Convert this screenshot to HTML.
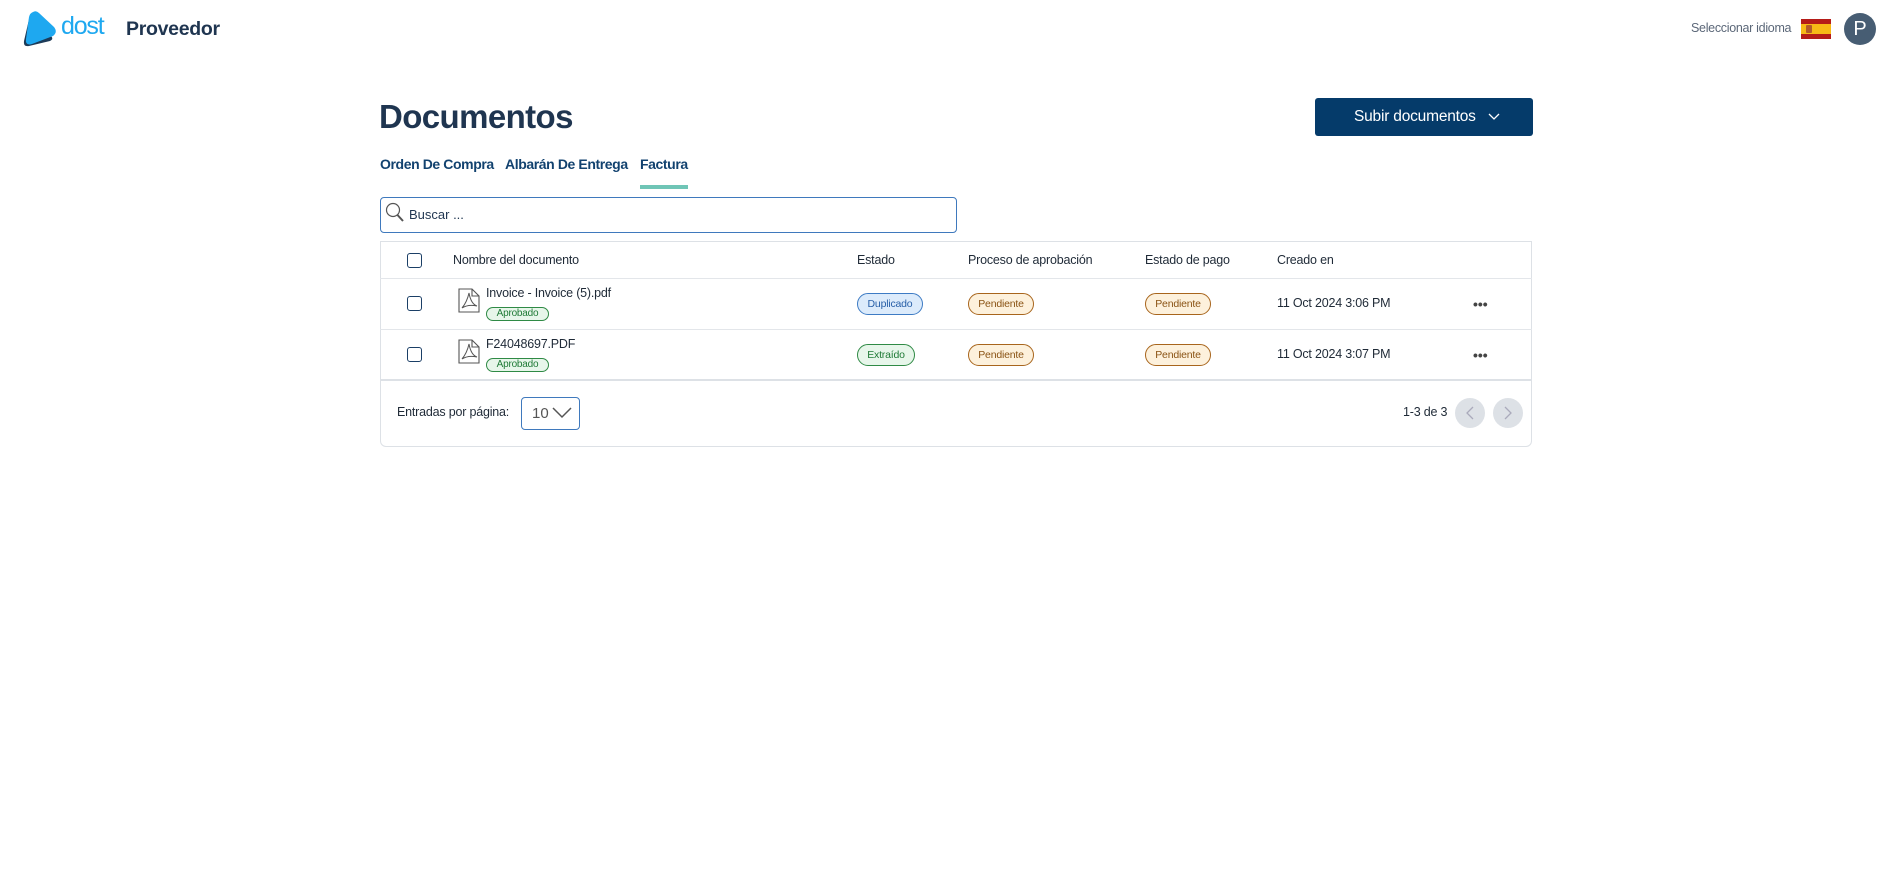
<!DOCTYPE html>
<html><head><meta charset="utf-8"><style>
*{box-sizing:border-box;margin:0;padding:0}
body{width:1898px;height:885px;background:#fff;font-family:"Liberation Sans",sans-serif;color:#1f2a37;position:relative;overflow:hidden}
.a{position:absolute}
.hd{font-size:12.5px;color:#1f2a37;letter-spacing:-0.2px}
.cb{position:absolute;width:15px;height:15px;border:1.5px solid #1b3f66;border-radius:3px}
.badge{position:absolute;height:22px;border-radius:11px;font-size:10.5px;line-height:20px;text-align:center;letter-spacing:-0.2px}
.pend{background:#fdf1dc;border:1.3px solid #a8651c;color:#8a5314;width:66px}
.apr{background:#e7f6ea;border:1.3px solid #2f8a45;color:#1f7a36;height:14px;line-height:12px;font-size:10px;width:63px;border-radius:7px}
.line{position:absolute;left:380px;width:1152px;height:1px;background:#e3e6ea}
.tab{position:absolute;top:156px;font-size:14px;font-weight:bold;color:#12426f;letter-spacing:-0.4px}
</style></head><body>
<svg class="a" style="left:20px;top:9px" width="38" height="40" viewBox="0 0 38 40"><path d="M10 6 L4 32 Q3 38 9 37 L30 32 Q34 30 31 27Z" fill="#1d3b58"/><path d="M13 3 Q16 1 19 4 L34 18 Q38 23 33 27 L12 35 Q5 37 6 30 L9 8 Q10 4 13 3Z" fill="#1ea8f0"/></svg>
<div class="a" style="left:61px;top:12px;font-size:25px;color:#1ea8f0;letter-spacing:-1.2px">dost</div>
<div class="a" style="left:126px;top:18px;font-size:19.5px;font-weight:bold;color:#1f3550;letter-spacing:-0.3px">Proveedor</div>
<div class="a" style="left:1691px;top:21px;font-size:12.5px;color:#5b6778;letter-spacing:-0.3px">Seleccionar idioma</div>
<div class="a" style="left:1801px;top:19px;width:30px;height:20px;background:linear-gradient(#b51c18 0 25%,#f7b916 25% 75%,#b51c18 75%)"></div>
<div class="a" style="left:1806px;top:25px;width:6px;height:8px;background:#b35a2a;border-radius:1px"></div>
<div class="a" style="left:1844px;top:13px;width:32px;height:32px;border-radius:50%;background:#475d73;color:#fff;font-size:20px;text-align:center;line-height:32px">P</div>

<div class="a" style="left:379px;top:98px;font-size:33px;font-weight:bold;color:#1f3550;letter-spacing:-0.6px">Documentos</div>
<div class="a" style="left:1315px;top:98px;width:218px;height:38px;background:#053b6a;border-radius:3px;color:#fff;font-size:15.5px;line-height:38px;padding-left:39px;letter-spacing:-0.2px">Subir documentos <svg width="12" height="8" viewBox="0 0 12 8" style="margin-left:8px"><path d="M1 1 L6 6 L11 1" stroke="#fff" fill="none" stroke-width="1.3"/></svg></div>

<div class="tab" style="left:380px">Orden De Compra</div>
<div class="tab" style="left:505px">Albarán De Entrega</div>
<div class="tab" style="left:640px">Factura</div>
<div class="a" style="left:640px;top:185px;width:48px;height:4px;background:#6fc5b6"></div>

<div class="a" style="left:380px;top:197px;width:577px;height:36px;border:1.3px solid #3f79bd;border-radius:4px"></div>
<svg class="a" style="left:385px;top:202px" width="20" height="22" viewBox="0 0 20 22"><circle cx="8" cy="8" r="6.5" stroke="#555" fill="none" stroke-width="1.2"/><path d="M12.5 13 L18 19" stroke="#555" stroke-width="2"/></svg>
<div class="a" style="left:409px;top:207px;font-size:13px;color:#1f3550">Buscar ...</div>

<div class="a" style="left:380px;top:241px;width:1152px;height:206px;border:1px solid #dde1e6;border-radius:0 0 6px 6px"></div>
<div class="line" style="top:278px"></div>
<div class="line" style="top:329px"></div>
<div class="line" style="top:379px;height:2px;background:#dde1e6"></div>

<div class="cb" style="left:407px;top:253px"></div>
<div class="a hd" style="left:453px;top:253px">Nombre del documento</div>
<div class="a hd" style="left:857px;top:253px">Estado</div>
<div class="a hd" style="left:968px;top:253px">Proceso de aprobación</div>
<div class="a hd" style="left:1145px;top:253px">Estado de pago</div>
<div class="a hd" style="left:1277px;top:253px">Creado en</div>

<div class="cb" style="left:407px;top:296px"></div>
<svg class="a" style="left:458px;top:288px" width="22" height="25" viewBox="0 0 22 25"><path d="M1 1 H14 L21 8 V24 H1Z M14 1 V8 H21" stroke="#555" fill="none" stroke-width="1.1"/><path d="M4 20 Q9 14 11 5 Q13 16 19 18 Q10 16 4 20Z" stroke="#555" fill="none" stroke-width="1"/></svg>
<div class="a" style="left:486px;top:286px;font-size:12.5px;letter-spacing:-0.2px">Invoice - Invoice (5).pdf</div>
<div class="badge apr" style="left:486px;top:307px">Aprobado</div>
<div class="badge" style="left:857px;top:293px;width:66px;background:#dcebfb;border:1.3px solid #3d7bc4;color:#2960a8">Duplicado</div>
<div class="badge pend" style="left:968px;top:293px">Pendiente</div>
<div class="badge pend" style="left:1145px;top:293px">Pendiente</div>
<div class="a" style="left:1277px;top:296px;font-size:12.5px;letter-spacing:-0.2px">11 Oct 2024 3:06 PM</div>
<div class="a" style="left:1473px;top:296px;font-size:14px;font-weight:bold;color:#444;letter-spacing:0px">•••</div>

<div class="cb" style="left:407px;top:347px"></div>
<svg class="a" style="left:458px;top:339px" width="22" height="25" viewBox="0 0 22 25"><path d="M1 1 H14 L21 8 V24 H1Z M14 1 V8 H21" stroke="#555" fill="none" stroke-width="1.1"/><path d="M4 20 Q9 14 11 5 Q13 16 19 18 Q10 16 4 20Z" stroke="#555" fill="none" stroke-width="1"/></svg>
<div class="a" style="left:486px;top:337px;font-size:12.5px;letter-spacing:-0.2px">F24048697.PDF</div>
<div class="badge apr" style="left:486px;top:358px">Aprobado</div>
<div class="badge" style="left:857px;top:344px;width:58px;background:#e7f6ea;border:1.3px solid #2f8a45;color:#1f7a36">Extraído</div>
<div class="badge pend" style="left:968px;top:344px">Pendiente</div>
<div class="badge pend" style="left:1145px;top:344px">Pendiente</div>
<div class="a" style="left:1277px;top:347px;font-size:12.5px;letter-spacing:-0.2px">11 Oct 2024 3:07 PM</div>
<div class="a" style="left:1473px;top:347px;font-size:14px;font-weight:bold;color:#444;letter-spacing:0px">•••</div>

<div class="a" style="left:397px;top:405px;font-size:12.5px;letter-spacing:-0.2px">Entradas por página:</div>
<div class="a" style="left:521px;top:397px;width:59px;height:33px;border:1.3px solid #3f79bd;border-radius:4px;font-size:15px;color:#555;line-height:31px;padding-left:10px">10</div>
<svg class="a" style="left:552px;top:407px" width="20" height="12" viewBox="0 0 20 12"><path d="M1 1 L10 10 L19 1" stroke="#555" fill="none" stroke-width="1.5"/></svg>
<div class="a" style="left:1403px;top:405px;font-size:12.5px;letter-spacing:-0.2px">1-3 de 3</div>
<div class="a" style="left:1455px;top:398px;width:30px;height:30px;border-radius:50%;background:#dde1e6"></div>
<div class="a" style="left:1493px;top:398px;width:30px;height:30px;border-radius:50%;background:#dde1e6"></div>
<svg class="a" style="left:1455px;top:398px" width="70" height="30" viewBox="0 0 70 30"><path d="M18 9 L12 15 L18 21" stroke="#aab" fill="none" stroke-width="1.3"/><path d="M50 9 L56 15 L50 21" stroke="#aab" fill="none" stroke-width="1.3"/></svg>
</body></html>
